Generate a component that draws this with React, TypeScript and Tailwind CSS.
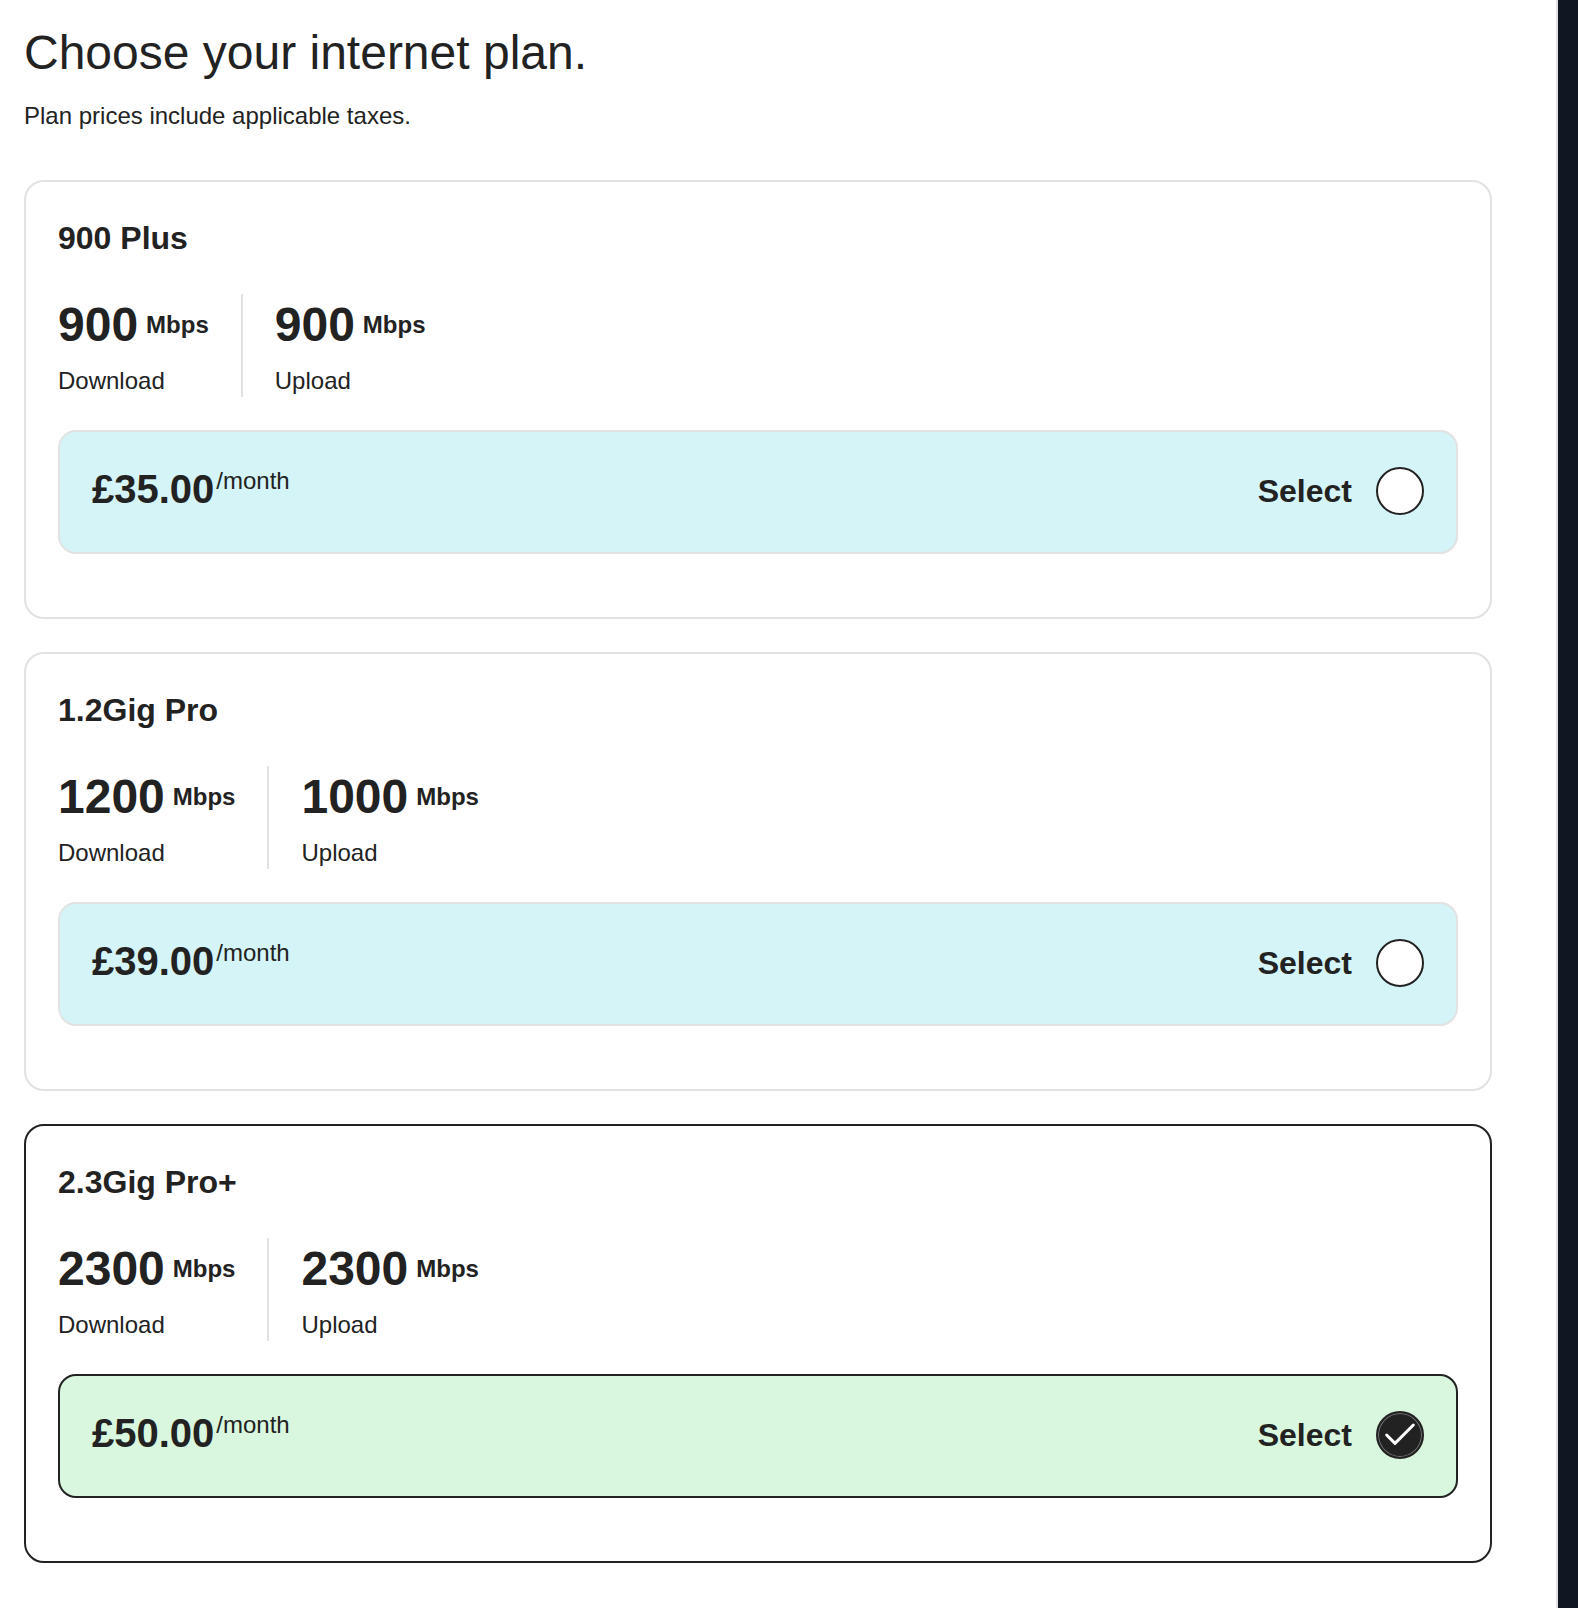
import { Check } from 'lucide-react'

interface Plan {
    name: string
    download: number
    upload: number
    price: string
    selected?: boolean
}

const plans: Plan[] = [
    { name: '900 Plus', download: 900, upload: 900, price: '£35.00' },
    { name: '1.2Gig Pro', download: 1200, upload: 1000, price: '£39.00' },
    { name: '2.3Gig Pro+', download: 2300, upload: 2300, price: '£50.00', selected: true },
]

const Speed = ({ value, label, first }: { value: number, label: string, first?: boolean }) => (
    <div className={first ? 'pr-8' : 'pl-8 border-l-2 border-[#e2e2e2]'}>
        <div className="h-[63px] flex items-center">
            <span className="text-[48px] font-bold leading-none">{value}</span>
            <span className="ml-2 text-[24px] font-bold leading-none">Mbps</span>
        </div>
        <div className="mt-2 text-[24px] leading-[32px]">{label}</div>
    </div>
)

const PlanCard = ({ plan }: { plan: Plan }) => {
    const { selected } = plan
    return (
        <div className={`rounded-[20px] border-2 bg-white px-8 pt-8 pb-[63px] ${selected ? 'border-[#222222]' : 'border-[#e2e2e2]'}`}>
            <h2 className="text-[32px] font-bold leading-[48px]">{plan.name}</h2>
            <div className="mt-8 flex">
                <Speed value={plan.download} label="Download" first />
                <Speed value={plan.upload} label="Upload" />
            </div>
            <div className={`mt-[33px] h-[124px] rounded-[18px] border-2 px-8 flex items-center justify-between
                ${selected ? 'border-[#222222] bg-[#d9f7df]' : 'border-[#e2e2e2] bg-[#d5f4f7]'}`}>
                <div className="mb-[6px] flex items-start">
                    <span className="text-[40px] font-bold leading-none">{plan.price}</span>
                    <span className="ml-[2px] text-[24px] leading-none">/month</span>
                </div>
                <div className="mb-[2px] flex items-center gap-6">
                    <span className="text-[32px] font-bold">Select</span>
                    {
                        selected ? (
                            <span className="w-12 h-12 rounded-full bg-[#222222] border-2 border-[#222222] shadow-[inset_0_0_0_1px_#777] grid place-items-center">
                                <Check size={40} strokeWidth={1.8} className="text-white" />
                            </span>
                        ) : (
                            <span className="w-12 h-12 rounded-full bg-white border-2 border-[#222222]" />
                        )
                    }
                </div>
            </div>
        </div>
    )
}

export default function App() {
    return (
        <div className="flex min-h-[1608px] bg-white text-[#222222] font-['Liberation_Sans',Arial,sans-serif]">
            <main className="flex-1 pl-6 pt-6">
                <h1 className="text-[48px] font-normal leading-[1.2]">Choose your internet plan.</h1>
                <p className="mt-4 text-[24px] leading-[36px]">Plan prices include applicable taxes.</p>
                <div className="mt-[46px] w-[1468px] flex flex-col gap-[33px]">
                    {plans.map((plan) => <PlanCard key={plan.name} plan={plan} />)}
                </div>
            </main>
            <div className="w-[22px] border-l-2 border-[#e0e0e0] bg-[#111722]" />
        </div>
    )
}
